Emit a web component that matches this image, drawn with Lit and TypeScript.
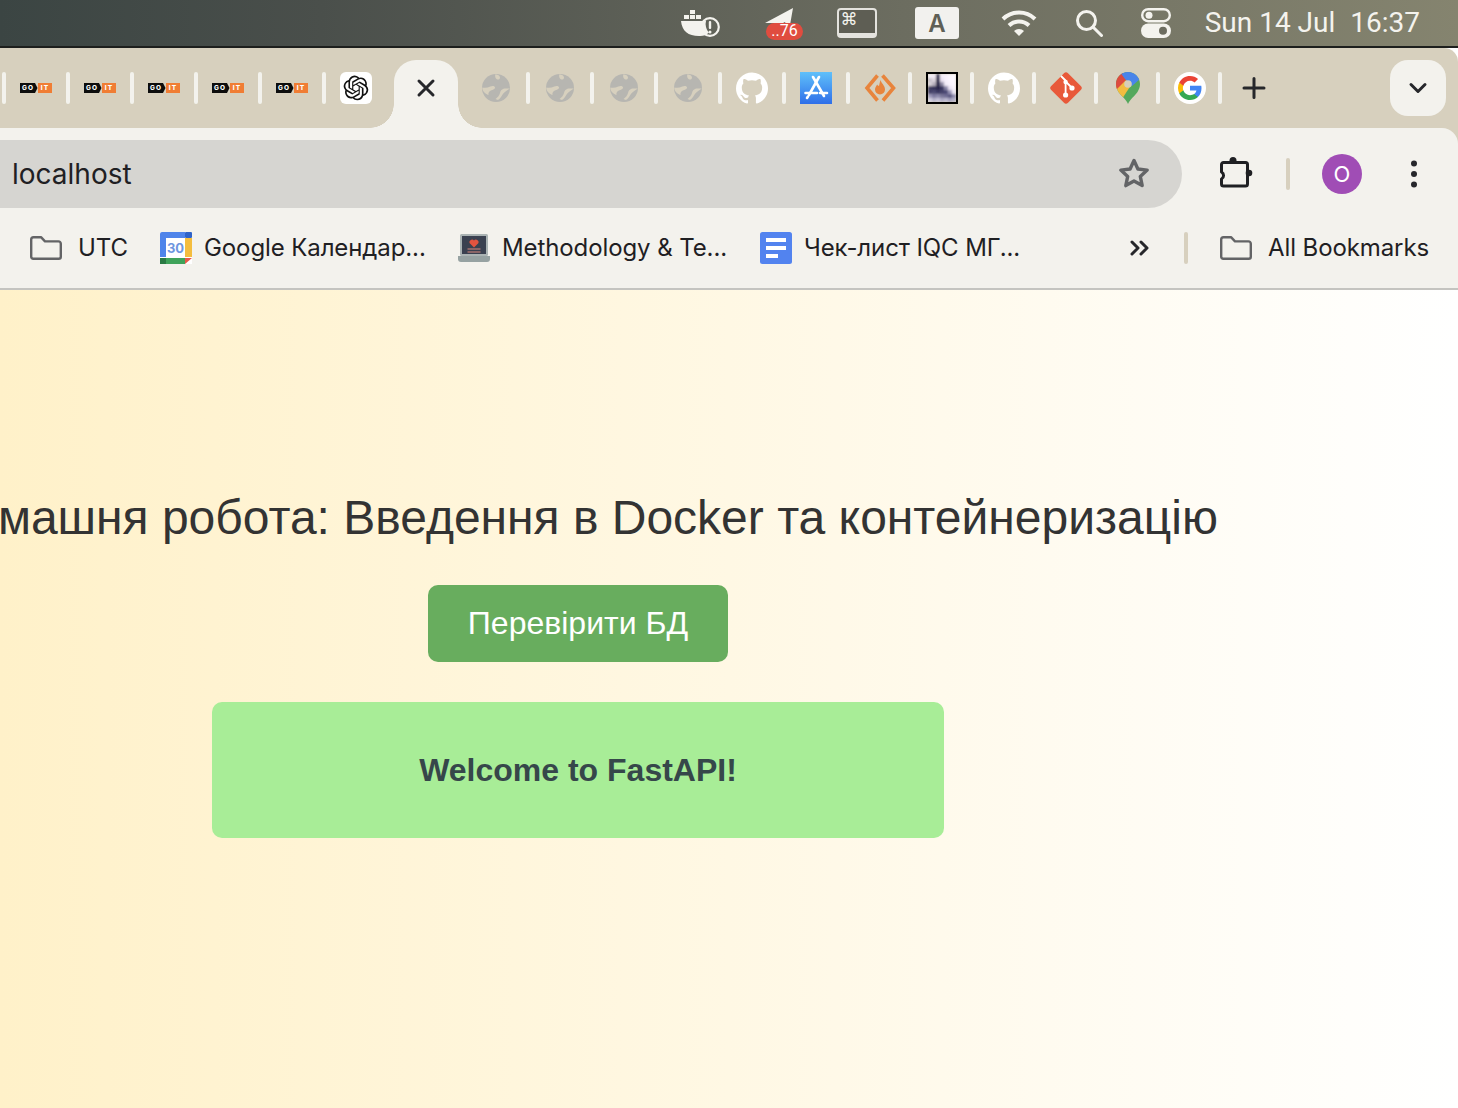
import { LitElement, html, svg, css } from 'lit';
import { customElement } from 'lit/decorators.js';

const goit = html`<svg width="32" height="10" viewBox="0 0 32 10">
  <path d="M0 0h15l2.500 5-2.500 5H0z" fill="#0d0d0d" />
  <rect x="18" width="14" height="10" fill="#f07d34" />
  <text x="8" y="7.300" text-anchor="middle" font-size="6.500" font-weight="800" fill="#fff" font-family="Inter, sans-serif" letter-spacing="1">GO</text>
  <text x="25" y="7.300" text-anchor="middle" font-size="6.500" font-weight="800" fill="#fff" font-family="Inter, sans-serif" letter-spacing="1">IT</text>
</svg>`;

const openai = html`<svg width="32" height="32" viewBox="0 0 32 32">
  <rect width="32" height="32" rx="6" fill="#fff" />
  <g transform="translate(3.600 3.600) scale(1.030)">
    <path fill="#111" d="M22.2819 9.8211a5.9847 5.9847 0 0 0-.5157-4.9108 6.0462 6.0462 0 0 0-6.5098-2.9A6.0651 6.0651 0 0 0 4.9807 4.1818a5.9847 5.9847 0 0 0-3.9977 2.9 6.0462 6.0462 0 0 0 .7427 7.0966 5.98 5.98 0 0 0 .511 4.9107 6.051 6.051 0 0 0 6.5146 2.9001A5.9847 5.9847 0 0 0 13.2599 24a6.0557 6.0557 0 0 0 5.7718-4.2058 5.9894 5.9894 0 0 0 3.9977-2.9001 6.0557 6.0557 0 0 0-.7475-7.0729zm-9.022 12.6081a4.4755 4.4755 0 0 1-2.8764-1.0408l.1419-.0804 4.7783-2.7582a.7948.7948 0 0 0 .3927-.6813v-6.7369l2.02 1.1686a.071.071 0 0 1 .038.052v5.5826a4.504 4.504 0 0 1-4.4945 4.4944zm-9.6607-4.1254a4.4708 4.4708 0 0 1-.5346-3.0137l.142.0852 4.783 2.7582a.7712.7712 0 0 0 .7806 0l5.8428-3.3685v2.3324a.0804.0804 0 0 1-.0332.0615L9.74 19.9502a4.4992 4.4992 0 0 1-6.1408-1.6464zM2.3408 7.8956a4.485 4.485 0 0 1 2.3655-1.9728V11.6a.7664.7664 0 0 0 .3879.6765l5.8144 3.3543-2.0201 1.1685a.0757.0757 0 0 1-.071 0l-4.8303-2.7865A4.504 4.504 0 0 1 2.3408 7.872zm16.5963 3.8558L13.1038 8.364 15.1192 7.2a.0757.0757 0 0 1 .071 0l4.8303 2.7913a4.4944 4.4944 0 0 1-.6765 8.1042v-5.6772a.79.79 0 0 0-.407-.667zm2.0107-3.0231l-.142-.0852-4.7735-2.7818a.7759.7759 0 0 0-.7854 0L9.409 9.2297V6.8974a.0662.0662 0 0 1 .0284-.0615l4.8303-2.7866a4.4992 4.4992 0 0 1 6.6802 4.66zM8.3065 12.863l-2.02-1.1638a.0804.0804 0 0 1-.038-.0567V6.0742a4.4992 4.4992 0 0 1 7.3757-3.4537l-.142.0805L8.704 5.459a.7948.7948 0 0 0-.3927.6813zm1.0976-2.3654l2.602-1.4998 2.6069 1.4998v2.9994l-2.5974 1.4997-2.6067-1.4997Z" />
  </g>
</svg>`;

const globe = html`<svg width="32" height="32" viewBox="0 0 32 32">
  <circle cx="16" cy="16" r="14" fill="#b7b6b1" />
  <path fill="#d7d0be" d="M2.300 15.500c3 .6 5.500.2 8-1 2.200-1 4.200-.6 4.700.8.500 1.500-1.500 2.200-3.500 3-2.500 1-3.500 2.500-3 4.700-3.500-1.500-6.500-4-6.200-7.500z" />
  <path fill="#d7d0be" d="M15.500 2.200c2.500.3 4.300 1.500 4.500 3 .2 1.600-1.200 2.600-2.500 2.300-1.800-.5-3-3.300-2-5.300z" />
  <path fill="#d7d0be" d="M29.800 16.500c-2.300.3-4.500-.3-6.300.2-2 .6-3 2.300-3.500 4.300-.6 2.500-2.500 4.500-4.500 6 .800.5 1.500.8 2.500 1 3-2 3.800-4.500 5.300-6.500 1.500-2 4-3 6.500-5z" />
</svg>`;

const github = html`<svg width="32" height="32" viewBox="0 0 24 24">
  <path fill="#fff" d="M12 .297c-6.630 0-12 5.373-12 12 0 5.303 3.438 9.800 8.205 11.385.6.113.82-.258.82-.577 0-.285-.01-1.040-.015-2.040-3.338.724-4.042-1.610-4.042-1.610C4.422 18.070 3.633 17.700 3.633 17.700c-1.087-.744.084-.729.084-.729 1.205.084 1.838 1.236 1.838 1.236 1.070 1.835 2.809 1.305 3.495.998.108-.776.417-1.305.76-1.605-2.665-.3-5.466-1.332-5.466-5.930 0-1.310.465-2.380 1.235-3.220-.135-.303-.54-1.523.105-3.176 0 0 1.005-.322 3.300 1.230.96-.267 1.980-.399 3-.405 1.020.006 2.040.138 3 .405 2.280-1.552 3.285-1.230 3.285-1.230.645 1.653.24 2.873.12 3.176.765.84 1.230 1.910 1.230 3.220 0 4.610-2.805 5.625-5.475 5.920.42.36.81 1.096.81 2.220 0 1.606-.015 2.896-.015 3.286 0 .315.21.69.825.57C20.565 22.092 24 17.592 24 12.297c0-6.627-5.373-12-12-12" />
</svg>`;

const appStore = html`<svg width="32" height="32" viewBox="0 0 32 32">
  <defs>
    <linearGradient id="as" x1="0" y1="0" x2="0" y2="1">
      <stop offset="0" stop-color="#5fc0fa" />
      <stop offset="1" stop-color="#2f6fe9" />
    </linearGradient>
  </defs>
  <rect width="32" height="32" fill="url(#as)" />
  <g stroke="#fff" stroke-width="2.600" stroke-linecap="round" fill="none">
    <path d="M19 5 9 23" />
    <path d="M13 5l11 19" />
    <path d="M5.500 21H17M20 21h7" />
    <path d="M8 24.500 7 26" />
  </g>
</svg>`;

const sublime = html`<svg width="32" height="32" viewBox="0 0 32 32">
  <path d="M13.500 3.500 3 16l10.500 12.500M18.500 3.500 29.500 16 19 28.500" fill="none" stroke="#e8843c" stroke-width="3.600" />
  <path d="M16.500 8c1 3.500 4.500 5.500 4.500 9.500a5 5 0 0 1-10 0c0-2.500 1.500-3.500 2.200-5 .6 1 1.200 1.400 1.800 1.500.5-2 .8-4 1.500-6z" fill="#e8843c" />
</svg>`;

// blurred thumbnail of a picture, drawn as a coarse grid of cells
const thumbCells = [
  '#f4eff8', '#f0e8f2', '#3d3a5c', '#f5eef9', '#f8f1fb', '#fbf6fd', '#fdf8fe',
  '#c9c3cc', '#ddd5dd', '#2f2c4d', '#e9e1f0', '#f7f0fb', '#fbf5fe', '#fdf8ff',
  '#d8d2d8', '#b7b0bc', '#2a2848', '#8f8aa5', '#f3ecf8', '#f9f3fd', '#fcf7fe',
  '#3f3d5e', '#34325a', '#2a2848', '#3a3860', '#8a86a8', '#ebe4f3', '#f8f2fc',
  '#45436a', '#4d4b72', '#3d3b64', '#45436c', '#4b4974', '#9a96b8', '#ece6f4',
  '#9c99b8', '#7f7ca0', '#8d8aac', '#7a7799', '#6f6c94', '#5a5880', '#8f8cae',
  '#d2cfe0', '#b8b5cc', '#c6c3d8', '#aeabc6', '#bcb9d0', '#a5a2c0', '#b5b2ca',
];
const thumb = html`<svg width="32" height="32" viewBox="0 0 32 32">
  <defs>
    <filter id="soft" x="0" y="0" width="1" height="1"><feGaussianBlur stdDeviation="0.8" /></filter>
  </defs>
  <g filter="url(#soft)">
    ${thumbCells.map(
      (c, i) => svg`<rect x=${2 + (i % 7) * 4} y=${2 + Math.floor(i / 7) * 4} width="4" height="4" fill=${c} />`
    )}
  </g>
  <rect x="1" y="1" width="30" height="30" fill="none" stroke="#000" stroke-width="2" />
</svg>`;

const git = html`<svg width="32" height="32" viewBox="0 0 32 32">
  <path d="M1.200 14 14 1.200a2.800 2.800 0 0 1 4 0L30.800 14a2.800 2.800 0 0 1 0 4L18 30.800a2.800 2.800 0 0 1-4 0L1.200 18a2.800 2.800 0 0 1 0-4z" fill="#e8593a" />
  <path d="M11 4l5 5M15.600 9v13.500M15.600 9.500l6.500 6.500" stroke="#fff" stroke-width="1.800" fill="none" />
  <circle cx="15.600" cy="23" r="2.600" fill="#fff" />
  <circle cx="15.600" cy="10" r="2.200" fill="#fff" />
  <circle cx="22" cy="16" r="2.600" fill="#fff" />
</svg>`;

const maps = html`<svg width="24" height="32" viewBox="0 0 24 32">
  <defs>
    <clipPath id="pin">
      <path d="M12 0C5.400 0 0 5.400 0 12c0 3 1 5.500 2.500 8 3 4.500 7.500 7 9.500 12 2-5 6.500-7.500 9.500-12C23 17.500 24 15 24 12 24 5.400 18.600 0 12 0z" />
    </clipPath>
  </defs>
  <g clip-path="url(#pin)">
    <rect width="24" height="32" fill="#54a85c" />
    <path d="M0 15v7l6 5 11-17-7-2z" fill="#f3bc3f" />
    <path d="M0 0h6l5 7-11 11z" fill="#dd4b3e" />
    <path d="M4 0h20v7l-8 7-7-7z" fill="#4a85ea" />
  </g>
  <circle cx="12" cy="12" r="3.800" fill="#d7cfb9" />
</svg>`;

const google = html`<svg width="32" height="32" viewBox="0 0 32 32">
  <circle cx="16" cy="16" r="16" fill="#fff" />
  <g transform="translate(4 4)">
    <path fill="#4285F4" d="M23.500 12.300c0-.85-.08-1.670-.22-2.450H12v4.640h6.450c-.28 1.500-1.120 2.770-2.400 3.620v3h3.880c2.270-2.090 3.570-5.170 3.570-8.810z" />
    <path fill="#34A853" d="M12 24c3.240 0 5.950-1.070 7.930-2.900l-3.880-3c-1.070.72-2.450 1.150-4.050 1.150-3.120 0-5.770-2.110-6.710-4.950H1.280v3.100C3.250 21.300 7.310 24 12 24z" />
    <path fill="#FBBC05" d="M5.290 14.300A7.200 7.200 0 0 1 4.910 12c0-.8.140-1.570.38-2.300V6.600H1.280A12 12 0 0 0 0 12c0 1.940.46 3.770 1.280 5.400l4.010-3.100z" />
    <path fill="#EA4335" d="M12 4.750c1.770 0 3.350.61 4.600 1.800l3.440-3.440C17.950 1.190 15.240 0 12 0 7.310 0 3.250 2.700 1.280 6.600l4.010 3.100C6.230 6.860 8.880 4.750 12 4.750z" />
  </g>
</svg>`;

const folder = html`<svg width="32" height="24" viewBox="0 0 32 24">
  <path d="M1.200 3.500a2.300 2.300 0 0 1 2.300-2.300h7.500l4 4.200h13.500a2.300 2.300 0 0 1 2.300 2.300v13a2 2 0 0 1-2 2H3.200a2 2 0 0 1-2-2z" fill="none" stroke="#636466" stroke-width="2.400" stroke-linejoin="round" />
</svg>`;

const calendar = html`<svg width="32" height="32" viewBox="0 0 32 32">
  <rect width="32" height="32" fill="#fff" />
  <path d="M0 2a2 2 0 0 1 2-2h23v6H6v19H0z" fill="#4f84ea" />
  <rect x="25" width="7" height="6" rx="1" fill="#2f63c9" />
  <rect x="25" y="6" width="7" height="19" fill="#f4bd3e" />
  <path d="M0 26h25v6H2a2 2 0 0 1-2-2z" fill="#3fa35a" />
  <rect y="26" width="6" height="6" fill="#2a7b44" />
  <path d="M25 26h7l-7 6z" fill="#e8584a" />
  <text x="15.500" y="21" text-anchor="middle" font-size="13" font-weight="700" fill="#6d96df" font-family="Inter, sans-serif">30</text>
</svg>`;

const laptop = html`<svg width="32" height="28" viewBox="0 0 32 28">
  <rect x="2" y="0" width="28" height="22" rx="1.500" fill="#aab3b3" />
  <rect x="4" y="2" width="24" height="18" fill="#3a4150" />
  <path d="M16 13.500 11.500 9a2.600 2.600 0 0 1 4.500-2.400A2.600 2.600 0 0 1 20.500 9z" fill="#e5533f" />
  <path d="M9.500 15h13M9.500 18h13" stroke="#d98a7e" stroke-width="1.200" />
  <path d="M0 22h32v3a3 3 0 0 1-3 3H3a3 3 0 0 1-3-3z" fill="#96a2a2" />
</svg>`;

const docs = html`<svg width="32" height="32" viewBox="0 0 32 32">
  <rect width="32" height="32" rx="2.500" fill="#5283ef" />
  <path d="M6 6h20v4H6zM6 14h20v4H6zM6 22h12v4H6z" fill="#fff" />
</svg>`;

const tabIcons = [goit, goit, goit, goit, goit, openai];
const afterTabIcons = [globe, globe, globe, globe, github, appStore, sublime, thumb, github, git, maps, google];

const bookmarks = [
  { icon: folder, label: 'UTC', width: 49 },
  { icon: calendar, label: 'Google Календар...', width: 221 },
  { icon: laptop, label: 'Methodology & Te...', width: 225 },
  { icon: docs, label: 'Чек-лист IQC МГ...', width: 218 },
];

@customElement('app-root')
export class AppRoot extends LitElement {
  static styles = css`
    :host {
      display: block;
      width: 1458px;
      height: 1108px;
      overflow: hidden;
      font-family: Inter, 'Noto Sans', sans-serif;
      color: #1f2023;
      background: #fff;
    }

    /* macOS menu bar */
    .menubar {
      height: 46px;
      display: flex;
      align-items: center;
      justify-content: flex-end;
      padding-right: 38px;
      background: linear-gradient(90deg, #3b4543 0%, #4a4f4b 22%, #6c6d60 62%, #85846f 100%);
      border-bottom: 2px solid #1d1f1d;
      color: #f4f3ee;
    }
    .menu-item {
      display: flex;
      align-items: center;
      justify-content: center;
    }
    .docker {
      margin-right: 42px;
    }
    .telegram {
      margin-right: 34px;
    }
    .keyboard {
      margin-right: 38px;
    }
    .lang {
      margin-right: 42px;
    }
    .wifi {
      margin-right: 38px;
    }
    .search {
      margin-right: 38px;
    }
    .clock {
      display: flex;
      gap: 15px;
      font-family: Roboto, sans-serif;
      font-size: 28px;
      line-height: 42px;
      margin-left: 34px;
      white-space: nowrap;
    }

    /* tab strip */
    .browser {
      background: #d7d0be;
      border-top-right-radius: 14px;
    }
    .strip {
      height: 80px;
      display: flex;
      align-items: flex-start;
      padding: 12px 12px 0 2px;
      box-sizing: border-box;
    }
    .tab-row {
      display: flex;
      align-items: center;
      height: 56px;
    }
    .slot {
      width: 60px;
      height: 32px;
      display: flex;
      align-items: center;
      justify-content: center;
      box-sizing: border-box;
    }
    .slot.narrow {
      width: 58px;
      padding-left: 2px;
    }
    .sep {
      width: 4px;
      height: 32px;
      border-radius: 2px;
      background: #f3f2ed;
      flex: none;
    }
    .active {
      position: relative;
      width: 64px;
      height: 68px;
      margin: 0 8px;
      background: #f3f2ed;
      border-radius: 22px 22px 0 0;
      display: flex;
      justify-content: center;
      padding-top: 14px;
      box-sizing: border-box;
      flex: none;
    }
    .active::before,
    .active::after {
      content: '';
      position: absolute;
      bottom: 0;
      width: 24px;
      height: 24px;
    }
    .active::before {
      left: -24px;
      background: radial-gradient(circle at 0 0, transparent 23.5px, #f3f2ed 24px);
    }
    .active::after {
      right: -24px;
      background: radial-gradient(circle at 100% 0, transparent 23.5px, #f3f2ed 24px);
    }
    .plus {
      width: 60px;
      height: 32px;
      margin-left: 2px;
      display: flex;
      align-items: center;
      justify-content: center;
    }
    .tab-list {
      width: 56px;
      height: 56px;
      margin-left: auto;
      border-radius: 18px;
      background: #f3f2ed;
      display: flex;
      align-items: center;
      justify-content: center;
    }

    /* toolbar */
    .toolbar {
      height: 80px;
      background: #f3f2ed;
      display: flex;
      align-items: flex-end;
      border-top-right-radius: 16px;
    }
    .omnibox {
      width: 1182px;
      height: 68px;
      flex: none;
      box-sizing: border-box;
      padding: 0 31px 0 12px;
      display: flex;
      align-items: center;
      justify-content: space-between;
      background: #d6d5d1;
      border-radius: 0 34px 34px 0;
      font-size: 28px;
    }
    .actions {
      height: 68px;
      display: flex;
      align-items: center;
      margin-left: 36px;
    }
    .vsep {
      width: 4px;
      height: 32px;
      border-radius: 2px;
      background: #d7d0be;
      margin: 0 32px;
      flex: none;
    }
    .avatar {
      width: 40px;
      height: 40px;
      border-radius: 50%;
      background: #a04db5;
      color: #fff;
      font-size: 22px;
      display: flex;
      align-items: center;
      justify-content: center;
    }
    .dots {
      margin-left: 48px;
      display: flex;
    }

    /* bookmarks bar */
    .bookmarks {
      height: 80px;
      background: #f3f2ed;
      border-bottom: 2px solid #c4c4c0;
      display: flex;
      align-items: center;
      padding-left: 30px;
      font-size: 24px;
      letter-spacing: -0.1px;
      white-space: nowrap;
    }
    .bookmark {
      display: flex;
      align-items: center;
      gap: 12px;
      margin-right: 33px;
      flex: none;
    }
    .bookmark.folder {
      gap: 16px;
    }
    .bookmark-label {
      display: block;
      line-height: 32px;
    }
    .more {
      margin-left: 74px;
      display: flex;
      flex: none;
    }
    .bar-sep {
      width: 4px;
      height: 32px;
      border-radius: 2px;
      background: #d7d0be;
      margin: 0 32px 0 33px;
      flex: none;
    }

    /* page */
    .page {
      height: 818px;
      background: linear-gradient(90deg, #fff1c9 0%, #ffffff 100%);
      overflow: hidden;
    }
    .content {
      width: 1156px;
      padding-top: 200px;
      display: flex;
      flex-direction: column;
      align-items: center;
      font-family: 'Liberation Sans', Arial, sans-serif;
    }
    h1 {
      margin: 0;
      font-size: 48px;
      line-height: 56px;
      font-weight: 400;
      color: #333;
      white-space: nowrap;
    }
    .check {
      width: 300px;
      height: 77px;
      margin-top: 39px;
      border: 0;
      border-radius: 10px;
      background: #68ad5e;
      color: #fff;
      font-family: inherit;
      font-size: 32px;
      padding: 0;
    }
    .message {
      width: 732px;
      height: 136px;
      margin-top: 40px;
      border-radius: 10px;
      background: #a8ed97;
      color: #36474a;
      font-size: 32px;
      font-weight: 700;
      display: flex;
      align-items: center;
      justify-content: center;
    }
  `;

  private renderMenubar() {
    return html`
      <div class="menubar">
        <div class="menu-item docker">
          <svg width="40" height="30" viewBox="0 0 40 30" fill="#f4f3ee">
            <path d="M9 2h5v4H9zM3 7h5v4H3zM9 7h5v4H9zM15 7h5v4h-5z" />
            <path d="M0 13h25a11 11 0 0 0 0 6c.8 3 2 4.500 3 5.500a13 13 0 0 1-10 3.500C7 28 1 23 0 13z" />
            <circle cx="29" cy="19" r="8.800" fill="none" stroke="#f4f3ee" stroke-width="2.200" />
            <rect x="27.800" y="13" width="2.400" height="8" rx="1" />
            <circle cx="29" cy="24" r="1.500" />
          </svg>
        </div>
        <div class="menu-item telegram">
          <svg width="40" height="36" viewBox="0 0 40 36">
            <path d="M2 18 30 3l-3 17-6-3-3 6-3-5z" fill="#f4f3ee" />
            <rect x="3" y="18" width="37" height="17" rx="8.500" fill="#e04c3f" />
            <text x="21.500" y="31" text-anchor="middle" font-size="16" fill="#fff" font-family="Roboto, sans-serif">..76</text>
          </svg>
        </div>
        <div class="menu-item keyboard">
          <svg width="40" height="30" viewBox="0 0 40 30">
            <rect x="1" y="1" width="38" height="28" rx="3" fill="#5e5e54" stroke="#e4e3de" stroke-width="2" />
            <path d="M1 25h38v1a3 3 0 0 1-3 3H4a3 3 0 0 1-3-3z" fill="#e4e3de" />
            <text x="12" y="17" text-anchor="middle" font-size="17" fill="#f4f3ee" font-family="'DejaVu Sans', sans-serif">⌘</text>
          </svg>
        </div>
        <div class="menu-item lang">
          <svg width="44" height="32" viewBox="0 0 44 32">
            <rect width="44" height="32" rx="3" fill="#f2f1ee" />
            <text x="22" y="24.500" text-anchor="middle" font-size="24" font-weight="600" fill="#5f5f56" font-family="Inter, sans-serif">A</text>
          </svg>
        </div>
        <div class="menu-item wifi">
          <svg width="36" height="28" viewBox="0 0 36 28" fill="none" stroke="#f4f3ee" stroke-width="4">
            <path d="M2 10a23 23 0 0 1 32 0" />
            <path d="M8 16.500a14.500 14.500 0 0 1 20 0" />
            <path d="M18 27l-5-5a7 7 0 0 1 10 0z" fill="#f4f3ee" stroke="none" />
          </svg>
        </div>
        <div class="menu-item search">
          <svg width="28" height="28" viewBox="0 0 28 28" fill="none" stroke="#f4f3ee" stroke-width="3">
            <circle cx="11.500" cy="11.500" r="9" />
            <path d="M18 18l8.500 8.500" stroke-linecap="round" />
          </svg>
        </div>
        <div class="menu-item">
          <svg width="30" height="30" viewBox="0 0 30 30">
            <rect x="1.200" y="1.200" width="27.600" height="12" rx="6" fill="none" stroke="#f4f3ee" stroke-width="2.400" />
            <circle cx="8" cy="7.200" r="3.500" fill="#f4f3ee" />
            <rect y="15.500" width="30" height="14.500" rx="7.200" fill="#f4f3ee" />
            <circle cx="22" cy="22.700" r="4" fill="#6c6c5f" />
          </svg>
        </div>
        <div class="clock"><span>Sun 14 Jul</span><span>16:37</span></div>
      </div>
    `;
  }

  private renderStrip() {
    return html`
      <div class="strip">
        <div class="tab-row">
          <span class="sep"></span>
          ${tabIcons.map(
            (icon, i) => html`<span class="slot">${icon}</span>${i < tabIcons.length - 1
                ? html`<span class="sep"></span>`
                : ''}`
          )}
        </div>
        <div class="active">
          <svg width="28" height="28" viewBox="0 0 28 28">
            <path d="M7 7l14 14M21 7 7 21" stroke="#26272b" stroke-width="3" stroke-linecap="round" />
          </svg>
        </div>
        <div class="tab-row">
          ${afterTabIcons.map(
            (icon, i) => html`<span class="slot ${i >= 6 ? 'narrow' : ''}">${icon}</span
              ><span class="sep"></span>`
          )}
          <span class="plus">
            <svg width="24" height="24" viewBox="0 0 24 24">
              <path d="M12 2.500v19M2 12h20" stroke="#26272b" stroke-width="3" stroke-linecap="round" />
            </svg>
          </span>
        </div>
        <div class="tab-list">
          <svg width="20" height="14" viewBox="0 0 20 14">
            <path d="M3 3.500l7 7 7-7" fill="none" stroke="#26272b" stroke-width="3" stroke-linecap="round" stroke-linejoin="round" />
          </svg>
        </div>
      </div>
    `;
  }

  private renderToolbar() {
    return html`
      <div class="toolbar">
        <div class="omnibox">
          <span>localhost</span>
          <svg width="34" height="32" viewBox="0 0 34 32">
            <path d="M17 2.500l3.900 8.500 9.300 1.100-6.900 6.300 1.900 9.200-8.200-4.600-8.200 4.600 1.900-9.200-6.900-6.300 9.300-1.100z" fill="none" stroke="#636466" stroke-width="3.400" stroke-linejoin="round" />
          </svg>
        </div>
        <div class="actions">
          <svg width="36" height="34" viewBox="0 0 36 34">
            <path d="M3.500 7.500a2 2 0 0 1 2-2h22a2 2 0 0 1 2 2v19.500a2 2 0 0 1-2 2h-22a2 2 0 0 1-2-2v-5a4 4 0 0 0 0-7z" fill="none" stroke="#1f2023" stroke-width="3" stroke-linejoin="round" />
            <circle cx="15" cy="3.500" r="3.500" fill="#1f2023" />
            <circle cx="31" cy="16" r="3.300" fill="#1f2023" />
          </svg>
          <span class="vsep"></span>
          <span class="avatar">O</span>
          <span class="dots">
            <svg width="8" height="30" viewBox="0 0 8 30" fill="#26272b">
              <circle cx="4" cy="4.500" r="3" />
              <circle cx="4" cy="15" r="3" />
              <circle cx="4" cy="25.500" r="3" />
            </svg>
          </span>
        </div>
      </div>
    `;
  }

  private renderBookmarks() {
    return html`
      <div class="bookmarks">
        ${bookmarks.map(
          (b) => html`<div class="bookmark ${b.icon === folder ? 'folder' : ''}">
            ${b.icon}<span class="bookmark-label" style="width:${b.width}px">${b.label}</span>
          </div>`
        )}
        <span class="more">
          <svg width="22" height="18" viewBox="0 0 22 18" fill="none" stroke="#26272b" stroke-width="3" stroke-linecap="round" stroke-linejoin="round">
            <path d="M3 3l6 6-6 6M12 3l6 6-6 6" />
          </svg>
        </span>
        <span class="bar-sep"></span>
        <div class="bookmark folder">
          ${folder}<span class="bookmark-label">All Bookmarks</span>
        </div>
      </div>
    `;
  }

  render() {
    return html`
      ${this.renderMenubar()}
      <div class="browser">
        ${this.renderStrip()} ${this.renderToolbar()} ${this.renderBookmarks()}
      </div>
      <div class="page">
        <div class="content">
          <h1>Домашня робота: Введення в Docker та контейнеризацію</h1>
          <button class="check">Перевірити БД</button>
          <div class="message">Welcome to FastAPI!</div>
        </div>
      </div>
    `;
  }
}
